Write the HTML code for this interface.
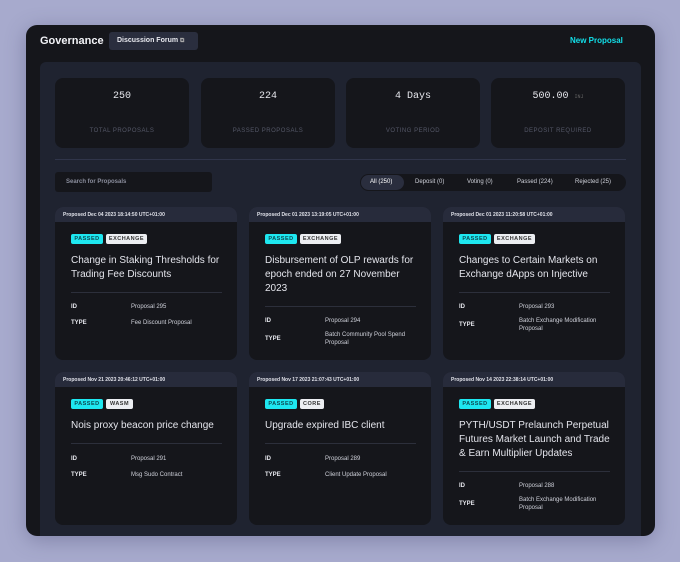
<!DOCTYPE html>
<html><head><meta charset="utf-8"><style>
*{margin:0;padding:0;box-sizing:border-box}
body{width:680px;height:562px;background:#a7aacd;font-family:"Liberation Sans",sans-serif;position:relative;overflow:hidden;color:#e6e7ee}
.win{position:absolute;left:26px;top:25px;width:629px;height:511px;background:#15161b;border-radius:11px;box-shadow:0 4px 20px rgba(60,60,100,.35);overflow:hidden}
.a{position:absolute}
.panel{left:14px;top:37px;width:601px;height:480px;background:#1f2330;border-radius:6px}
.stat{top:16px;width:134px;height:70px;background:#15161b;border-radius:8px;text-align:center}
.stat .n{font-family:"Liberation Mono",monospace;font-size:10px;color:#e5e6ec;margin-top:13px}
.stat .l{font-size:6px;letter-spacing:.5px;color:#555868;margin-top:26px}
.card{width:182px;background:#15161b;border-radius:8px;overflow:hidden}
.card .h{height:15px;background:#272b3b;font-size:5px;font-weight:bold;padding:5px 0 0 8px;color:#dfe0e8}
.b{position:absolute;left:16px;top:27px;height:10px;font-size:5.5px;font-weight:bold;letter-spacing:.5px;border-radius:2px;padding:2px 0 0;text-align:center;width:32px}
.b2{left:51px;background:#eceef2;color:#333;width:41px}
.t{position:absolute;left:16px;top:47px;font-size:10px;line-height:14px;color:#e4e5ec;width:156px}
.hr{position:absolute;left:16px;width:151px;height:1px;background:#2c2f3b}
.k{position:absolute;left:16px;font-size:6px;font-weight:bold;color:#e5e6ec}
.v{position:absolute;left:76px;font-size:6px;color:#cfd1da;line-height:8px;width:95px}
.p{background:#1ee7f0;color:#0c4a52}
</style></head><body>
<div class="win">
<div class="a" style="left:14px;top:10px;font-size:11px;font-weight:bold;color:#f2f3f7">Governance</div>
<div class="a" style="left:83px;top:7px;width:89px;height:18px;background:#2a2e3e;border-radius:3px;font-size:7px;font-weight:bold;padding:5px 0 0 8px;color:#e8e9ef">Discussion Forum <span style="font-size:6px;color:#aaa">⧉</span></div>
<div class="a" style="left:544px;top:11px;font-size:8px;font-weight:bold;color:#12e0ea">New Proposal</div>
<div class="a panel">
 <div class="a stat" style="left:15px"><div class="n">250</div><div class="l">TOTAL PROPOSALS</div></div>
 <div class="a stat" style="left:161px"><div class="n">224</div><div class="l">PASSED PROPOSALS</div></div>
 <div class="a stat" style="left:306px"><div class="n">4 Days</div><div class="l">VOTING PERIOD</div></div>
 <div class="a stat" style="left:451px"><div class="n">500.00 <span style="font-size:5px;color:#666">INJ</span></div><div class="l">DEPOSIT REQUIRED</div></div>
 <div class="a" style="left:15px;top:97px;width:571px;height:1px;background:#30354a"></div>
 <div class="a" style="left:15px;top:110px;width:157px;height:20px;background:#15161b;border-radius:3px;font-size:6px;color:#8a8d9c;padding:7px 0 0 11px;font-weight:bold">Search for Proposals</div>
 <div class="a" style="left:320px;top:112px;width:266px;height:17px;background:#15161b;border-radius:9px;font-size:6px;color:#cfd1da">
  <div class="a" style="left:1px;top:1px;width:43px;height:15px;background:#2a2e3e;border-radius:8px"></div>
  <span class="a" style="left:10px;top:5px;color:#fff">All (250)</span>
  <span class="a" style="left:55px;top:5px">Deposit (0)</span>
  <span class="a" style="left:107px;top:5px">Voting (0)</span>
  <span class="a" style="left:157px;top:5px">Passed (224)</span>
  <span class="a" style="left:215px;top:5px">Rejected (25)</span>
 </div>
</div>

<div class="a card" style="left:29px;top:182px;height:153px"><div class="h">Proposed Dec 04 2023 18:14:50 UTC+01:00</div>
<div class="b p">PASSED</div><div class="b b2">EXCHANGE</div>
<div class="t">Change in Staking Thresholds for Trading Fee Discounts</div>
<div class="hr" style="top:85px"></div>
<div class="k" style="top:97px">ID</div><div class="v" style="top:96px">Proposal 295</div>
<div class="k" style="top:113px">TYPE</div><div class="v" style="top:112px">Fee Discount Proposal</div></div>

<div class="a card" style="left:223px;top:182px;height:153px"><div class="h">Proposed Dec 01 2023 13:19:05 UTC+01:00</div>
<div class="b p">PASSED</div><div class="b b2">EXCHANGE</div>
<div class="t">Disbursement of OLP rewards for epoch ended on 27 November 2023</div>
<div class="hr" style="top:99px"></div>
<div class="k" style="top:111px">ID</div><div class="v" style="top:110px">Proposal 294</div>
<div class="k" style="top:129px">TYPE</div><div class="v" style="top:124px">Batch Community Pool Spend Proposal</div></div>

<div class="a card" style="left:417px;top:182px;height:153px"><div class="h">Proposed Dec 01 2023 11:20:58 UTC+01:00</div>
<div class="b p">PASSED</div><div class="b b2">EXCHANGE</div>
<div class="t">Changes to Certain Markets on Exchange dApps on Injective</div>
<div class="hr" style="top:85px"></div>
<div class="k" style="top:97px">ID</div><div class="v" style="top:96px">Proposal 293</div>
<div class="k" style="top:115px">TYPE</div><div class="v" style="top:110px">Batch Exchange Modification Proposal</div></div>

<div class="a card" style="left:29px;top:347px;height:153px"><div class="h">Proposed Nov 21 2023 20:46:12 UTC+01:00</div>
<div class="b p">PASSED</div><div class="b b2" style="width:27px">WASM</div>
<div class="t">Nois proxy beacon price change</div>
<div class="hr" style="top:71px"></div>
<div class="k" style="top:84px">ID</div><div class="v" style="top:83px">Proposal 291</div>
<div class="k" style="top:100px">TYPE</div><div class="v" style="top:99px">Msg Sudo Contract</div></div>

<div class="a card" style="left:223px;top:347px;height:153px"><div class="h">Proposed Nov 17 2023 21:07:43 UTC+01:00</div>
<div class="b p">PASSED</div><div class="b b2" style="width:24px">CORE</div>
<div class="t">Upgrade expired IBC client</div>
<div class="hr" style="top:71px"></div>
<div class="k" style="top:84px">ID</div><div class="v" style="top:83px">Proposal 289</div>
<div class="k" style="top:100px">TYPE</div><div class="v" style="top:99px">Client Update Proposal</div></div>

<div class="a card" style="left:417px;top:347px;height:153px"><div class="h">Proposed Nov 14 2023 22:38:14 UTC+01:00</div>
<div class="b p">PASSED</div><div class="b b2">EXCHANGE</div>
<div class="t">PYTH/USDT Prelaunch Perpetual Futures Market Launch and Trade &amp; Earn Multiplier Updates</div>
<div class="hr" style="top:99px"></div>
<div class="k" style="top:111px">ID</div><div class="v" style="top:110px">Proposal 288</div>
<div class="k" style="top:129px">TYPE</div><div class="v" style="top:124px">Batch Exchange Modification Proposal</div></div>
</div>
</body></html>
